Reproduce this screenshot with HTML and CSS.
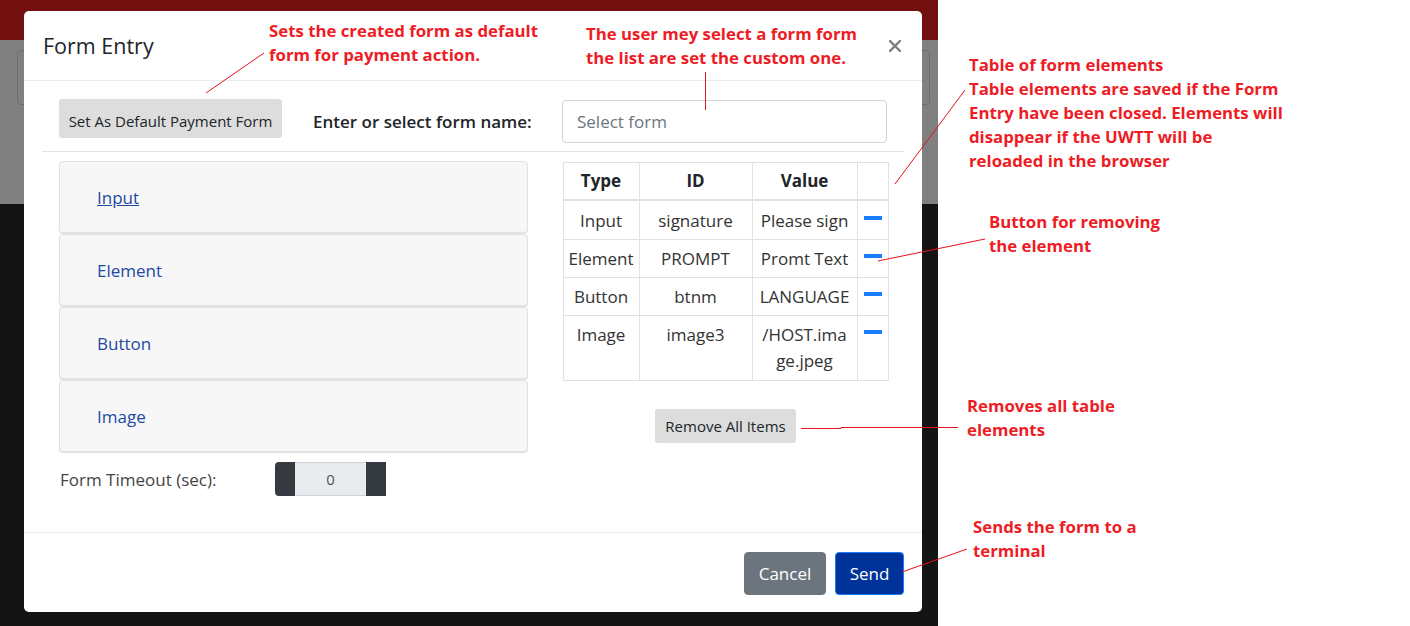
FILE: index.html
```html
<!DOCTYPE html>
<html>
<head>
<meta charset="utf-8">
<link rel="stylesheet" href="styles.css">
</head>
<body>
<div class="stage">
  <div class="app">
    <div class="app-top"></div>
    <div class="app-mid"><div class="ghost-card"></div></div>
    <div class="app-bottom"></div>
  </div>

  <div class="modal">
    <div class="modal-header">
      <h5 class="modal-title">Form Entry</h5>
      <button class="close" aria-label="Close">
        <svg width="12" height="12" viewBox="0 0 12 12"><path d="M1 1L11 11M11 1L1 11" stroke="#808080" stroke-width="2.4" stroke-linecap="square"/></svg>
      </button>
    </div>
    <div class="modal-body">
      <div class="top-row">
        <button class="btn-light btn-default">Set As Default Payment Form</button>
        <label class="form-label">Enter or select form name:</label>
        <input class="form-input" type="text" placeholder="Select form">
      </div>
      <div class="divider"></div>
      <div class="content-row">
        <div class="left-col">
          <div class="list">
            <div class="list-item"><a class="item-link underline">Input</a></div>
            <div class="list-item"><a class="item-link">Element</a></div>
            <div class="list-item"><a class="item-link">Button</a></div>
            <div class="list-item"><a class="item-link">Image</a></div>
          </div>
          <div class="timeout-row">
            <span class="timeout-label">Form Timeout (sec):</span>
            <div class="spinner">
              <span class="spin-btn left"></span>
              <span class="spin-value">0</span>
              <span class="spin-btn right"></span>
            </div>
          </div>
        </div>
        <div class="right-col">
          <table class="elements">
            <colgroup><col class="c1"><col class="c2"><col class="c3"><col class="c4"></colgroup>
            <thead>
              <tr><th>Type</th><th>ID</th><th>Value</th><th></th></tr>
            </thead>
            <tbody>
              <tr class="first"><td>Input</td><td>signature</td><td>Please sign</td><td class="rm"><span class="minus"></span></td></tr>
              <tr><td>Element</td><td>PROMPT</td><td>Promt Text</td><td class="rm"><span class="minus"></span></td></tr>
              <tr><td>Button</td><td>btnm</td><td>LANGUAGE</td><td class="rm"><span class="minus"></span></td></tr>
              <tr class="last"><td>Image</td><td>image3</td><td class="brk">/HOST.image.jpeg</td><td class="rm"><span class="minus"></span></td></tr>
            </tbody>
          </table>
          <button class="btn-light btn-remove">Remove All Items</button>
        </div>
      </div>
    </div>
    <div class="modal-footer">
      <button class="btn-cancel">Cancel</button>
      <button class="btn-send">Send</button>
    </div>
  </div>

  <div class="note n1">Sets the created form as default<br>form for payment action.</div>
  <div class="note n2">The user mey select a form form<br>the list are set the custom one.</div>
  <div class="note n3">Table of form elements<br>Table elements are saved if the Form<br>Entry have been closed. Elements will<br>disappear if the UWTT will be<br>reloaded in the browser</div>
  <div class="note n4">Button for removing<br>the element</div>
  <div class="note n5">Removes all table<br>elements</div>
  <div class="note n6">Sends the form to a<br>terminal</div>

  <svg class="leaders" width="1410" height="626" viewBox="0 0 1410 626">
    <g stroke="#e8101c" stroke-width="1" fill="none">
      <line x1="206" y1="93" x2="264" y2="53"/>
      <line x1="705.5" y1="72" x2="705.5" y2="110"/>
      <line x1="895" y1="184" x2="965" y2="90"/>
      <line x1="878" y1="261" x2="985" y2="239"/>
      <polyline points="801,428.5 841,428.5 841,427.5 958,427.5"/>
      <line x1="902" y1="572" x2="967" y2="549"/>
    </g>
  </svg>
</div>
</body>
</html>
```

FILE: styles.css
```css
* { box-sizing: border-box; }
html, body { margin: 0; padding: 0; }
body {
  width: 1410px;
  height: 626px;
  overflow: hidden;
  background: #ffffff;
  font-family: "Open Sans", "Noto Sans", "Liberation Sans", sans-serif;
  color: #212529;
}
.stage { position: relative; width: 1410px; height: 626px; }

/* backdrop app */
.app {
  width: 938px;
  height: 626px;
  display: flex;
  flex-direction: column;
}
.app-top { height: 40px; background: #720f0f; }
.app-mid { height: 164px; background: #808080; padding: 10px 8px 0 17px; }
.ghost-card {
  height: 55px;
  border: 1px solid #6c6c6c;
  border-radius: 4px;
}
.app-bottom { flex: 1; background: #141414; }

/* modal */
.modal {
  position: absolute;
  left: 24px;
  top: 11px;
  width: 898px;
  height: 601px;
  background: #fff;
  border-radius: 5px;
  display: flex;
  flex-direction: column;
}
.modal-header {
  height: 70px;
  border-bottom: 1px solid #e9ecef;
  display: flex;
  align-items: center;
  justify-content: space-between;
  padding: 0 21px 0 19px;
}
.modal-title {
  margin: 0;
  font-size: 21.5px;
  font-weight: 400;
  line-height: 1.2;
  color: #212529;
}
.close {
  border: 0;
  background: none;
  padding: 0;
  width: 12px;
  height: 12px;
  display: flex;
}

.modal-body {
  flex: 1;
  padding: 18px 18px 0 18px;
  display: flex;
  flex-direction: column;
}
.top-row {
  display: flex;
  align-items: center;
  padding: 0 17px;
  height: 44px;
}
.btn-light {
  border: 0;
  background: #dddddd;
  color: #212529;
  border-radius: 3px;
  font-family: inherit;
  font-size: 15px;
  padding: 0;
}
.btn-default {
  width: 223px;
  height: 39px;
  padding-top: 5px;
  align-self: flex-start;
}
.form-label {
  font-size: 17px;
  font-weight: 600;
  margin-left: 31px;
  width: 249px;
  color: #212529;
}
.form-input {
  width: 325px;
  height: 43px;
  border: 1px solid #ced4da;
  border-radius: 4px;
  font-family: inherit;
  font-size: 17px;
  padding: 0 14px;
  color: #495057;
}
.form-input::placeholder { color: #6c757d; }
.divider {
  height: 1px;
  background: #e3e3e3;
  margin-top: 8px;
}

.content-row {
  display: flex;
  padding: 0 16px 0 17px;
  margin-top: 9px;
  justify-content: space-between;
}
.left-col { width: 469px; }
.list { display: flex; flex-direction: column; gap: 1px; }
.list-item {
  height: 72px;
  background: #f7f7f7;
  border: 1px solid #e2e2e2;
  border-radius: 4px;
  box-shadow: 0 1px 1px rgba(0,0,0,0.12);
  display: flex;
  align-items: center;
  padding-left: 37px;
}
.item-link {
  color: #2149a3;
  font-size: 17px;
  cursor: pointer;
}
.item-link.underline { text-decoration: underline; }

.timeout-row {
  display: flex;
  align-items: center;
  margin-top: 10px;
  padding-left: 1px;
}
.timeout-label {
  width: 215px;
  font-size: 17px;
  color: #444;
}
.spinner {
  display: flex;
  height: 34px;
  width: 111px;
}
.spin-btn { width: 20px; background: #343a40; }
.spin-btn.left { border-radius: 4px 0 0 4px; }
.spin-value {
  flex: 1;
  background: #e9ecef;
  border: 1px solid #ced4da;
  border-left: 0;
  border-right: 0;
  display: flex;
  align-items: center;
  justify-content: center;
  font-size: 15px;
  color: #555;
}

.right-col {
  width: 325px;
  display: flex;
  flex-direction: column;
  align-items: center;
  margin-top: 1px;
}
.elements {
  border-collapse: collapse;
  table-layout: fixed;
  width: 325px;
  font-size: 17px;
  color: #333;
}
.c1 { width: 76px; }
.c2 { width: 113px; }
.c3 { width: 105px; }
.c4 { width: 31px; }
.elements th, .elements td {
  border: 1px solid #dee2e6;
  text-align: center;
  padding: 6px 2px 5px 2px;
  line-height: 26px;
  vertical-align: top;
}
.elements th {
  font-weight: 700;
  color: #212529;
  border-bottom: 2px solid #dee2e6;
  padding-top: 5px;
  padding-bottom: 5px;
}
.elements tr.first td { padding-top: 7px; }
.elements tr.last td { padding-bottom: 6px; }
.elements td.brk { word-break: break-all; padding-left: 6px; padding-right: 6px; }
.elements td.rm { padding: 14px 0 0 0; }
.elements tr.first td.rm { padding-top: 15px; }
.minus {
  display: block;
  width: 18px;
  height: 4px;
  background: #1a7dfb;
  margin-left: 6px;
}
.btn-remove {
  margin-top: 28px;
  width: 141px;
  height: 34px;
}

.modal-footer {
  height: 80px;
  border-top: 1px solid #e9ecef;
  display: flex;
  justify-content: flex-end;
  align-items: flex-start;
  padding: 19px 18px 0 0;
  gap: 9px;
}
.btn-cancel, .btn-send {
  height: 43px;
  border-radius: 4px;
  font-family: inherit;
  font-size: 17px;
  color: #fff;
  padding: 0 0 1px 0;
}
.btn-cancel {
  width: 82px;
  background: #6c757d;
  border: 1px solid #6c757d;
}
.btn-send {
  width: 69px;
  background: #003399;
  border: 1px solid #1a7dfb;
}

/* annotations */
.note {
  position: absolute;
  color: #ee1c25;
  font-family: "Open Sans", "Noto Sans", sans-serif;
  font-weight: 700;
  font-size: 16.8px;
  line-height: 24px;
  white-space: nowrap;
}
.n1 { left: 269px; top: 19px; }
.n2 { left: 586px; top: 22px; }
.n3 { left: 969px; top: 53px; }
.n4 { left: 989px; top: 210px; }
.n5 { left: 967px; top: 394px; }
.n6 { left: 973px; top: 515px; }
.leaders { position: absolute; left: 0; top: 0; pointer-events: none; }
```
